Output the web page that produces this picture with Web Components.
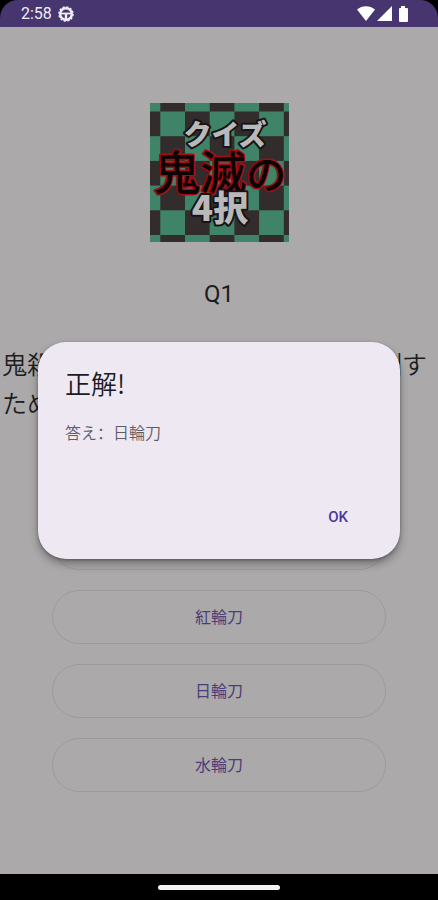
<!DOCTYPE html>
<html lang="ja">
<head>
<meta charset="utf-8">
<meta name="viewport" content="width=device-width, initial-scale=1">
<title>クイズ</title>
<style>
html,body{margin:0;background:#000}
body{font-family:Roboto,"Noto Sans CJK JP",sans-serif;color:#1b1a1c}
</style>
</head>
<body>
<quiz-app></quiz-app>
<script>
function define(name, html){
  const t=document.createElement('template');
  t.innerHTML=html;
  customElements.define(name,class extends HTMLElement{
    constructor(){super();this.attachShadow({mode:'open'}).append(t.content.cloneNode(true));}
  });
}

define('status-bar',`
<style>
:host{display:flex;align-items:center;justify-content:space-between;height:27px;padding:0 30px 0 21px;box-sizing:border-box;background:#46356e;border-radius:18px 18px 0 0;color:#f1edf7}
.side{display:flex;align-items:center;gap:6px}
.right{gap:2px}
time{font-size:16px;line-height:27px}
svg{display:block}
</style>
<div class="side"><time>2:58</time>
<svg width="16" height="16" viewBox="0 0 16 16" fill="none" stroke="#f1edf7"><circle cx="8" cy="8" r="5.800" stroke-width="2.400"/><circle cx="8" cy="8" r="7.100" stroke-width="1.400" stroke-dasharray="2.200 1.520"/><path d="M3 7.500h10" stroke-width="1.800"/><path d="M8 8v5" stroke-width="2.400"/></svg></div>
<div class="side right">
<svg width="18" height="15" viewBox="0 0 18 15" fill="#fff"><path d="M0 3.500C5-1 13-1 18 3.500L9 15Z"/></svg>
<svg width="15" height="15" viewBox="0 0 15 15" fill="#fff"><path d="M15 0V15H0Z"/></svg>
<svg width="14" height="16" viewBox="0 0 14 16" fill="#fff"><path d="M7 0h4v2h2q1 0 1 1v12q0 1-1 1H6q-1 0-1-1V3q0-1 1-1h1z"/></svg>
</div>`);

define('app-logo',`
<style>:host{display:block;width:139px;height:139px}svg{display:block;width:100%;height:100%}
text{font-family:"Noto Sans CJK JP",sans-serif;font-weight:900;text-anchor:middle;paint-order:stroke;stroke-linejoin:round}
.brush{font-weight:500;fill:#0c0304;stroke:#a30d12;stroke-width:3px}</style>
<svg viewBox="0 0 139 139" role="img" aria-label="クイズ 鬼滅の 4択">
<defs><pattern id="p" x="10.300" y="8.500" width="49.400" height="49.400" patternUnits="userSpaceOnUse"><rect width="49.400" height="49.400" fill="#332c2d"/><path d="M0 0h24.700v24.700H0zM24.700 24.700h24.700v24.700H24.700z" fill="#3f8369"/></pattern></defs>
<rect width="139" height="139" fill="url(#p)"/>
<text class="brush" x="70" y="86" font-size="46"><tspan>鬼滅</tspan><tspan font-size="40">の</tspan></text>
<text x="75" y="42" font-size="28" fill="#bab8b8" stroke="#171415" stroke-width="4">クイズ</text>
<text x="70" y="118" font-size="35" fill="#bab8b8" stroke="#171415" stroke-width="4">4択</text>
</svg>`);

define('answer-button',`
<style>
:host{display:block}
button{display:block;width:100%;height:54px;box-sizing:border-box;border:1px solid #9c9a9c;border-radius:27px;background:none;color:#4b3d78;font:400 16px/24px Roboto,"Noto Sans CJK JP",sans-serif;padding:2px 0 0}
</style><button type="button"><slot></slot></button>`);

define('result-dialog',`
<style>
:host{display:block;box-sizing:border-box;background:#eee8f3;border-radius:28px;padding:24px 27px 22px;box-shadow:0 5px 9px rgba(0,0,0,.32),0 1px 3px rgba(0,0,0,.28)}
h2{margin:0 0 16px;font-family:"Noto Sans CJK JP",sans-serif;font-weight:350;font-size:26px;line-height:34px;color:#1b1a1e}
p{margin:0;font-size:16px;font-weight:350;line-height:32px;color:#605b65}
.actions{display:flex;justify-content:flex-end;margin-top:47px;padding-right:12px}
button{border:0;background:none;color:#4c379a;font:500 15px/22px Roboto,sans-serif;height:40px;padding:0 13px}
</style>
<h2><slot name="title"></slot></h2><p><slot></slot></p>
<div class="actions"><button type="button">OK</button></div>`);

define('nav-handle',`
<style>:host{display:flex;justify-content:center;align-items:center;height:26px;background:#000}
span{width:122px;height:5px;border-radius:3px;background:#f2f2f2}</style><span></span>`);

define('quiz-app',`
<style>
:host{display:flex;flex-direction:column;min-height:100vh;position:relative}
main{flex:1;display:flex;flex-direction:column;background:#aba9aa}
app-logo{margin:76px auto 0}
h1{margin:36px 0;text-align:center;font-weight:400;font-size:24px;line-height:32px;color:#1d1c1e}
.question{margin:0;padding:0 2px;font-size:25px;font-weight:350;line-height:39px;color:#1d1c1e}
.answers{display:flex;flex-direction:column;gap:20px;padding:92px 52px 82px}
.overlay{position:absolute;inset:0;display:flex;align-items:center;padding:0 38px}
.colon{font-family:"Noto Sans CJK SC",sans-serif}
result-dialog{flex:1}
</style>
<status-bar></status-bar>
<main>
<app-logo></app-logo>
<h1>Q1</h1>
<p class="question">鬼殺隊の剣士が持つ鬼の首を切り倒すため</p>
<div class="answers"><answer-button>月輪刀</answer-button><answer-button>紅輪刀</answer-button><answer-button>日輪刀</answer-button><answer-button>水輪刀</answer-button></div>
</main>
<nav-handle></nav-handle>
<div class="overlay"><result-dialog role="dialog" aria-modal="true" aria-label="正解!"><span slot="title">正解!</span>答え<span class="colon" lang="zh-Hans">：</span>日輪刀</result-dialog></div>`);
</script>
</body>
</html>
